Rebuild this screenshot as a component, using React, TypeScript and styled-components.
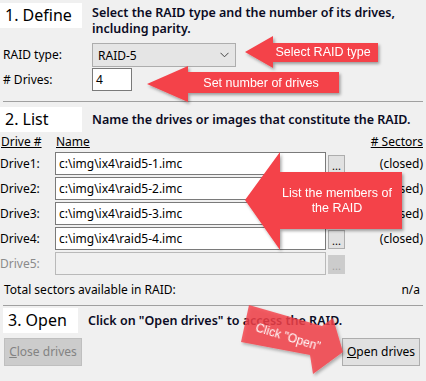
import React from "react";
import styled, { createGlobalStyle } from "styled-components";

const UI_FONT = `"Noto Sans", "Open Sans", sans-serif`;
const CALLOUT_RED = "#f4424a";

const GlobalStyle = createGlobalStyle`
  html, body {
    margin: 0;
    padding: 0;
    background: #f0f0f0;
  }
  body {
    font-family: ${UI_FONT};
    font-size: 12px;
    color: #000;
  }
`;

const Page = styled.div`
  position: relative;
  box-sizing: border-box;
  width: 426px;
  height: 381px;
  padding-top: 3px;
  overflow: hidden;
  background: #f0f0f0;
`;

const SectionHead = styled.div<{ $top?: number; $align?: string }>`
  display: flex;
  align-items: ${(p) => p.$align ?? "center"};
  margin-top: ${(p) => p.$top ?? 0}px;
`;

const StepBox = styled.div<{ $inset?: number; $width: number }>`
  flex-shrink: 0;
  box-sizing: border-box;
  width: ${(p) => p.$width}px;
  height: 25px;
  margin-left: ${(p) => p.$inset ?? 0}px;
  padding-left: 5px;
  background: #fff;
  font-size: 16px;
  line-height: 24px;
  font-weight: 400;
  color: #000;
`;

const StepText = styled.div<{ $gap: number; $pad?: number }>`
  margin-left: ${(p) => p.$gap}px;
  padding-top: ${(p) => p.$pad ?? 0}px;
  font-size: 12.5px;
  font-weight: 600;
  line-height: 16px;
  color: #0b0b24;
`;

const FormGrid = styled.div`
  display: grid;
  grid-template-columns: 89px auto;
  row-gap: 1px;
  align-items: center;
  margin-top: 6px;
  padding-left: 3px;
`;

const FieldLabel = styled.span<{ $disabled?: boolean }>`
  line-height: 16px;
  color: ${(p) => (p.$disabled ? "#8b8b8b" : "#000")};
`;

const FakeSelect = styled.div`
  box-sizing: border-box;
  display: flex;
  align-items: center;
  justify-content: space-between;
  width: 144px;
  height: 24px;
  padding: 0 6px 0 5px;
  background: #e5e5e5;
  border: 1px solid #adadad;
`;

const TextBox = styled.div<{ $width?: number; $disabled?: boolean }>`
  box-sizing: border-box;
  width: ${(p) => (p.$width ? `${p.$width}px` : "100%")};
  height: 23px;
  padding-left: 3px;
  line-height: 21px;
  white-space: nowrap;
  background: ${(p) => (p.$disabled ? "#f0f0f0" : "#fff")};
  border: 1px solid ${(p) => (p.$disabled ? "#b9b9b9" : "#7a7a7a")};
`;

const Divider = styled.div<{ $top: number }>`
  height: 1px;
  margin: ${(p) => p.$top}px 3px 0;
  background: #a0a0a0;
`;

const DriveGrid = styled.div`
  display: grid;
  grid-template-columns: 55px 271px 19px 1fr;
  grid-template-rows: 16px;
  grid-auto-rows: 23px;
  row-gap: 2px;
  align-items: center;
  margin-top: 2px;
  padding-right: 3px;
`;

const ColumnHead = styled.span<{ $right?: boolean }>`
  padding-left: ${(p) => (p.$right ? 0 : 1)}px;
  line-height: 16px;
  text-decoration: underline;
  text-align: ${(p) => (p.$right ? "right" : "left")};
`;

const GridRow = styled.div`
  display: contents;
`;

const DotsButton = styled.div<{ $disabled?: boolean }>`
  box-sizing: border-box;
  justify-self: end;
  width: 17px;
  height: 19px;
  margin-top: 1px;
  font-size: 11px;
  line-height: 20px;
  text-align: center;
  color: ${(p) => (p.$disabled ? "#a3a3a3" : "#000")};
  background: ${(p) => (p.$disabled ? "#cccccc" : "#e1e1e1")};
  border: 1px solid ${(p) => (p.$disabled ? "#cccccc" : "#adadad")};
`;

const Status = styled.span`
  text-align: right;
`;

const TotalRow = styled.div`
  display: flex;
  justify-content: space-between;
  margin-top: 7px;
  padding: 0 6px 0 4px;
  line-height: 16px;
`;

const ButtonRow = styled.div`
  display: flex;
  justify-content: space-between;
  margin-top: 5px;
  padding: 0 6px 0 4px;
`;

const PushButton = styled.div<{ $disabled?: boolean }>`
  box-sizing: border-box;
  width: 78px;
  height: 28px;
  line-height: 26px;
  text-align: center;
  color: ${(p) => (p.$disabled ? "#838383" : "#000")};
  background: ${(p) => (p.$disabled ? "#cccccc" : "#e1e1e1")};
  border: 1px solid ${(p) => (p.$disabled ? "#bfbfbf" : "#adadad")};

  u {
    text-decoration: underline;
  }
`;

const Overlay = styled.svg`
  position: absolute;
  inset: 0;
  pointer-events: none;
  font-family: "Liberation Sans", Arial, sans-serif;
`;

const drives = [
  { id: 1, path: "c:\\img\\ix4\\raid5-1.imc" },
  { id: 2, path: "c:\\img\\ix4\\raid5-2.imc" },
  { id: 3, path: "c:\\img\\ix4\\raid5-3.imc" },
  { id: 4, path: "c:\\img\\ix4\\raid5-4.imc" },
];

const Chevron = () => (
  <svg width="9" height="6" viewBox="0 0 9 6">
    <path d="M0.5 0.8 L4.5 4.8 L8.5 0.8" fill="none" stroke="#444" strokeWidth="1" />
  </svg>
);

const Callouts = () => (
  <Overlay width="426" height="381" viewBox="0 0 426 381">
    <defs>
      <filter id="shade" x="-10%" y="-10%" width="130%" height="140%">
        <feDropShadow dx="1.5" dy="2" stdDeviation="1.5" floodColor="#000" floodOpacity="0.35" />
      </filter>
    </defs>
    <g filter="url(#shade)" fill={CALLOUT_RED}>
      <polygon points="245,52 273,36 273,43 378,43 378,62 273,62 273,68" />
      <polygon points="147,84 188,66 188,72 339,72 339,93 188,93 188,102" />
      <polygon points="245,200 280,152 280,172 402,172 402,229 280,229 280,250" />
      <polygon
        points="249,305 322,326 333,318 343,352 313,374 310,355 241,342"
        opacity="0.82"
      />
    </g>
    <g fill="#fff" fontSize="12.5" textAnchor="middle">
      <text x="323" y="56">Select RAID type</text>
      <text x="261" y="87">Set number of drives</text>
      <text x="337" y="197">List the members of</text>
      <text x="337" y="212">the RAID</text>
      <text x="288" y="341" fontSize="12" transform="rotate(17 288 337)">
        Click "Open"
      </text>
    </g>
  </Overlay>
);

const App: React.FC = () => (
  <Page>
    <GlobalStyle />

    <SectionHead $align="flex-start">
      <StepBox $width={82}>1. Define</StepBox>
      <StepText $gap={10} $pad={2}>
        Select the RAID type and the number of its drives,
        <br />
        including parity.
      </StepText>
    </SectionHead>
    <FormGrid>
      <FieldLabel>RAID type:</FieldLabel>
      <FakeSelect>
        RAID-5
        <Chevron />
      </FakeSelect>
      <FieldLabel># Drives:</FieldLabel>
      <TextBox $width={40}>4</TextBox>
    </FormGrid>

    <Divider $top={10} />

    <SectionHead $top={5}>
      <StepBox $width={82}>2. List</StepBox>
      <StepText $gap={10}>Name the drives or images that constitute the RAID.</StepText>
    </SectionHead>
    <DriveGrid>
      <GridRow>
        <ColumnHead>Drive #</ColumnHead>
        <ColumnHead>Name</ColumnHead>
        <span />
        <ColumnHead $right># Sectors</ColumnHead>
      </GridRow>
      {drives.map((d) => (
        <GridRow key={d.id}>
          <FieldLabel>Drive{d.id}:</FieldLabel>
          <TextBox>{d.path}</TextBox>
          <DotsButton>...</DotsButton>
          <Status>(closed)</Status>
        </GridRow>
      ))}
      <GridRow>
        <FieldLabel $disabled>Drive5:</FieldLabel>
        <TextBox $disabled />
        <DotsButton $disabled>...</DotsButton>
        <span />
      </GridRow>
    </DriveGrid>
    <TotalRow>
      <span>Total sectors available in RAID:</span>
      <span>n/a</span>
    </TotalRow>

    <Divider $top={7} />

    <SectionHead $top={2}>
      <StepBox $width={75} $inset={3}>3. Open</StepBox>
      <StepText $gap={10}>Click on "Open drives" to access the RAID.</StepText>
    </SectionHead>
    <ButtonRow>
      <PushButton $disabled>
        <u>C</u>lose drives
      </PushButton>
      <PushButton>
        <u>O</u>pen drives
      </PushButton>
    </ButtonRow>

    <Callouts />
  </Page>
);

export default App;
